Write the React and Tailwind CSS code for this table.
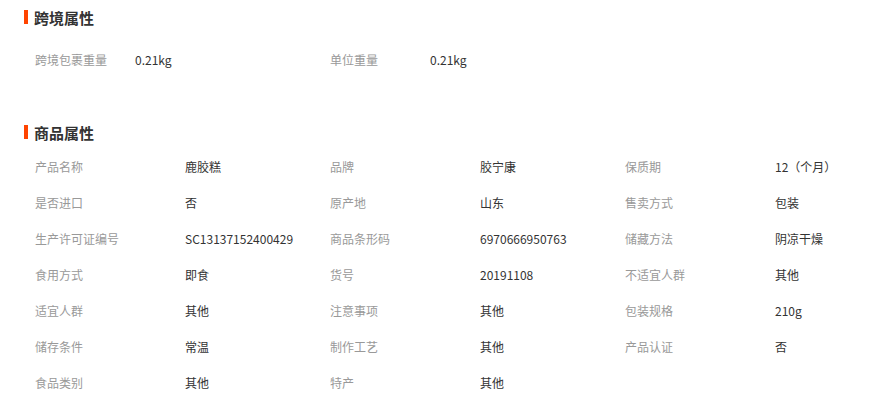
const CROSS = [
  ['跨境包裹重量', '0.21kg'],
  ['单位重量', '0.21kg'],
];

const PROPS = [
  ['产品名称', '鹿胶糕'], ['品牌', '胶宁康'], ['保质期', '12（个月）'],
  ['是否进口', '否'], ['原产地', '山东'], ['售卖方式', '包装'],
  ['生产许可证编号', 'SC13137152400429'], ['商品条形码', '6970666950763'], ['储藏方法', '阴凉干燥'],
  ['食用方式', '即食'], ['货号', '20191108'], ['不适宜人群', '其他'],
  ['适宜人群', '其他'], ['注意事项', '其他'], ['包装规格', '210g'],
  ['储存条件', '常温'], ['制作工艺', '其他'], ['产品认证', '否'],
  ['食品类别', '其他'], ['特产', '其他'],
];

const Title = ({ children }) => (
  <div className="flex items-center h-[34px] pl-[24px]">
    <span className="w-[4px] h-[14px] bg-[#ff4400]" />
    <span className="ml-[6px] text-[15px] leading-[15px] font-bold text-[#333]">{children}</span>
  </div>
);

export default function App() {
  return (
    <div
      className="w-[874px] h-[401px] bg-white overflow-hidden text-[12px]"
      style={{ fontFamily: '"Microsoft YaHei", "Noto Sans CJK SC", "Liberation Sans", sans-serif' }}
    >
      <Title>跨境属性</Title>
      <div className="grid grid-cols-[295px_295px_1fr] pl-[35px] mt-[8px]">
        {CROSS.map(([k, v]) => (
          <div key={k} className="h-[36px] flex items-center">
            <span className="w-[100px] text-[#999]">{k}</span>
            <span className="text-[#333]">{v}</span>
          </div>
        ))}
      </div>

      <div className="mt-[37px]">
        <Title>商品属性</Title>
      </div>
      <div className="grid grid-cols-[295px_295px_1fr] pl-[35px]">
        {PROPS.map(([k, v]) => (
          <div key={k} className="h-[36px] flex items-center">
            <span className="w-[150px] shrink-0 text-[#999]">{k}</span>
            <span className="text-[#333] whitespace-nowrap">{v}</span>
          </div>
        ))}
      </div>
    </div>
  );
}
